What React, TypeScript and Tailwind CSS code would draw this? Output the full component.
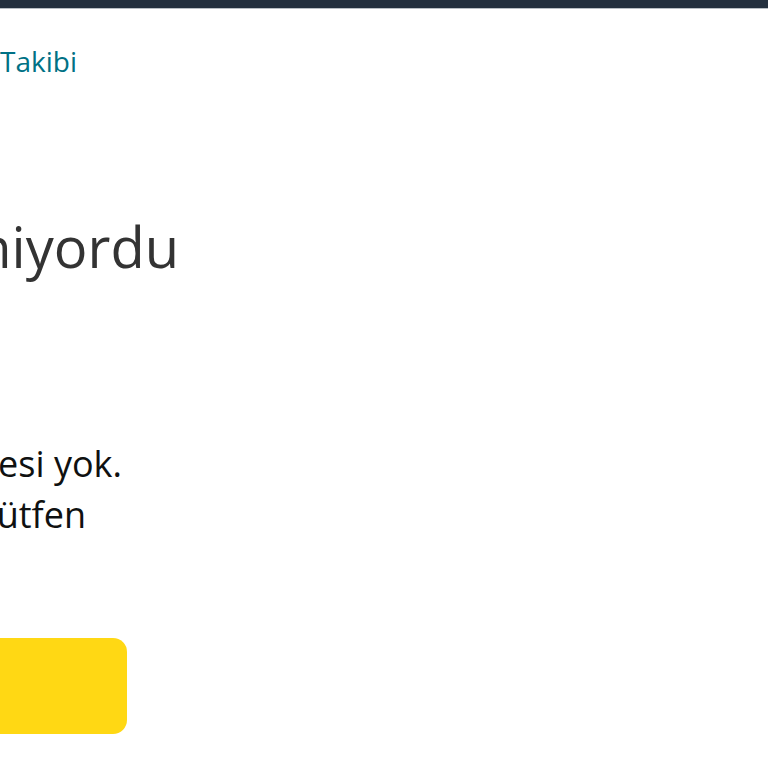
export default function App() {
  return (
    <div className="min-h-[768px] w-[768px] overflow-hidden bg-white font-['Open_Sans',sans-serif]">
      <div className="h-[9px] bg-[#232f3e] border-b border-[#b8bec4]" />
      <div className="mt-[38px] flex w-[77px] justify-end whitespace-nowrap text-[28px] leading-none text-[#007185]">
        Sipariş Takibi
      </div>
      <h1 className="mt-[143px] flex w-[179px] justify-end whitespace-nowrap text-[56px] font-normal leading-none text-[#333333]">
        Sipariş yükleniyordu
      </h1>
      <div className="mt-[164px] text-[36px] leading-[51px] text-[#0f1111]">
        <div className="flex w-[122px] justify-end whitespace-nowrap">Bu siparişin takip bilgisi henüz güncellemesi yok.</div>
        <div className="flex w-[86px] justify-end whitespace-nowrap">Daha sonra tekrar deneyin veya lütfen</div>
      </div>
      <div className="mt-[98px] flex w-[127px] justify-end">
        <button className="h-[96px] w-[200px] shrink-0 rounded-[14px] bg-[#ffd814]" />
      </div>
    </div>
  );
}
